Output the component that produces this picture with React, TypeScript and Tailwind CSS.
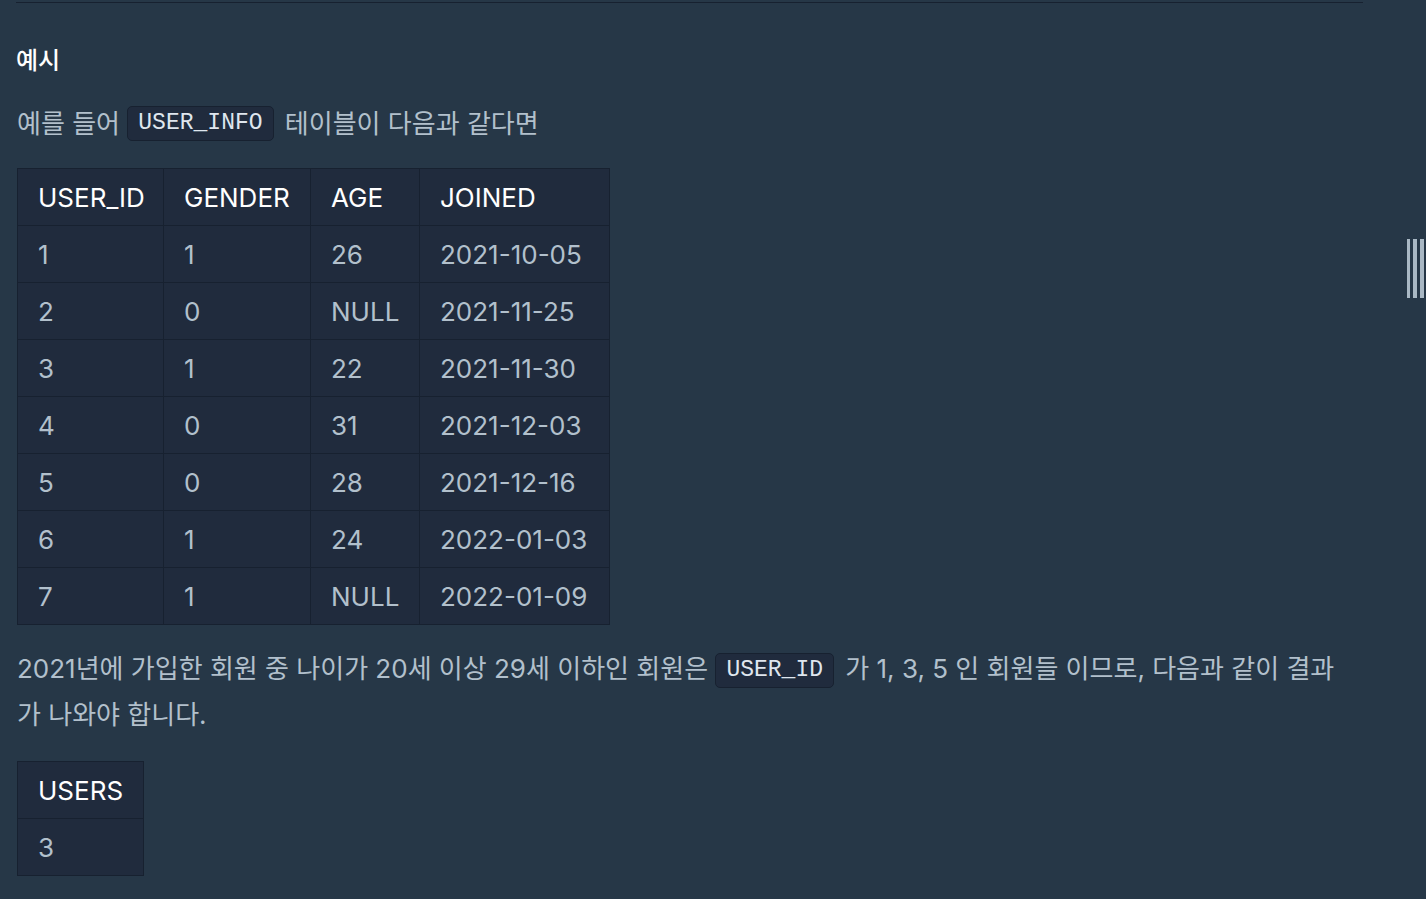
const rows = [
  ['1', '1', '26', '2021-10-05'],
  ['2', '0', 'NULL', '2021-11-25'],
  ['3', '1', '22', '2021-11-30'],
  ['4', '0', '31', '2021-12-03'],
  ['5', '0', '28', '2021-12-16'],
  ['6', '1', '24', '2022-01-03'],
  ['7', '1', 'NULL', '2022-01-09'],
]

const colWidths = ['w-[146px]', 'w-[147px]', 'w-[109px]', 'w-[190px]']

function Code({ children }: { children: string }) {
  return (
    <code className="mr-[4px] inline-block h-[35px] rounded-[5px] border border-[#172130] bg-[#202b3d] px-[10px] align-middle font-['Liberation_Mono','DejaVu_Sans_Mono',monospace] text-[23px] leading-[33px] text-[#dfe6ee]">
      {children}
    </code>
  )
}

export default function App() {
  return (
    <div className="relative min-h-[899px] w-[1426px] overflow-hidden bg-[#263747] font-['Inter','Noto_Sans_CJK_KR',sans-serif] text-[26px] text-[#b2c0cc]">
      <div className="pl-4 pr-[63px] pt-[2px]">
        <div className="h-px bg-[#172130]" />

        {/* 예시 */}
        <h5 className="mt-[40px] text-[24px] font-medium leading-9 text-white">예시</h5>

        <p className="mt-[21px] flex h-[46px] items-center whitespace-pre pl-px">
          예를 들어 <Code>USER_INFO</Code> 테이블이 다음과 같다면
        </p>

        <table className="ml-px mt-[22px] w-[592px] table-fixed border-collapse border border-[#172130] bg-[#202b3d]">
          <colgroup>
            {colWidths.map((w) => (
              <col key={w} className={w} />
            ))}
          </colgroup>
          <thead>
            <tr className="h-[57px]">
              {['USER_ID', 'GENDER', 'AGE', 'JOINED'].map((h) => (
                <th key={h} className="whitespace-nowrap border border-[#172130] px-[20px] pt-px text-left font-normal text-white">
                  {h}
                </th>
              ))}
            </tr>
          </thead>
          <tbody>
            {rows.map((r) => (
              <tr key={r[0]} className="h-[57px]">
                {r.map((c, i) => (
                  <td key={i} className="whitespace-nowrap border border-[#172130] px-[20px] pt-px">
                    {c}
                  </td>
                ))}
              </tr>
            ))}
          </tbody>
        </table>

        <p className="mt-[21px] whitespace-nowrap pl-px leading-[46px]">
          2021년에 가입한 회원 중 나이가 20세 이상 29세 이하인 회원은 <Code>USER_ID</Code> 가 1, 3, 5 인 회원들 이므로, 다음과 같이 결과
          <br />가 나와야 합니다.
        </p>

        <table className="ml-px mt-[23px] w-[127px] table-fixed border-collapse border border-[#172130] bg-[#202b3d]">
          <thead>
            <tr className="h-[57px]">
              <th className="border border-[#172130] px-[20px] pt-px text-left font-normal text-white">USERS</th>
            </tr>
          </thead>
          <tbody>
            <tr className="h-[57px]">
              <td className="border border-[#172130] px-[20px] pt-px">3</td>
            </tr>
          </tbody>
        </table>
      </div>

      {/* resize handle */}
      <div className="absolute left-[1407px] top-[239px] flex h-[59px] gap-[3px]">
        <div className="w-[3px] bg-[#a9b8c4]" />
        <div className="w-[4px] bg-[#a9b8c4]" />
        <div className="w-[4px] bg-[#a9b8c4]" />
      </div>
    </div>
  )
}
